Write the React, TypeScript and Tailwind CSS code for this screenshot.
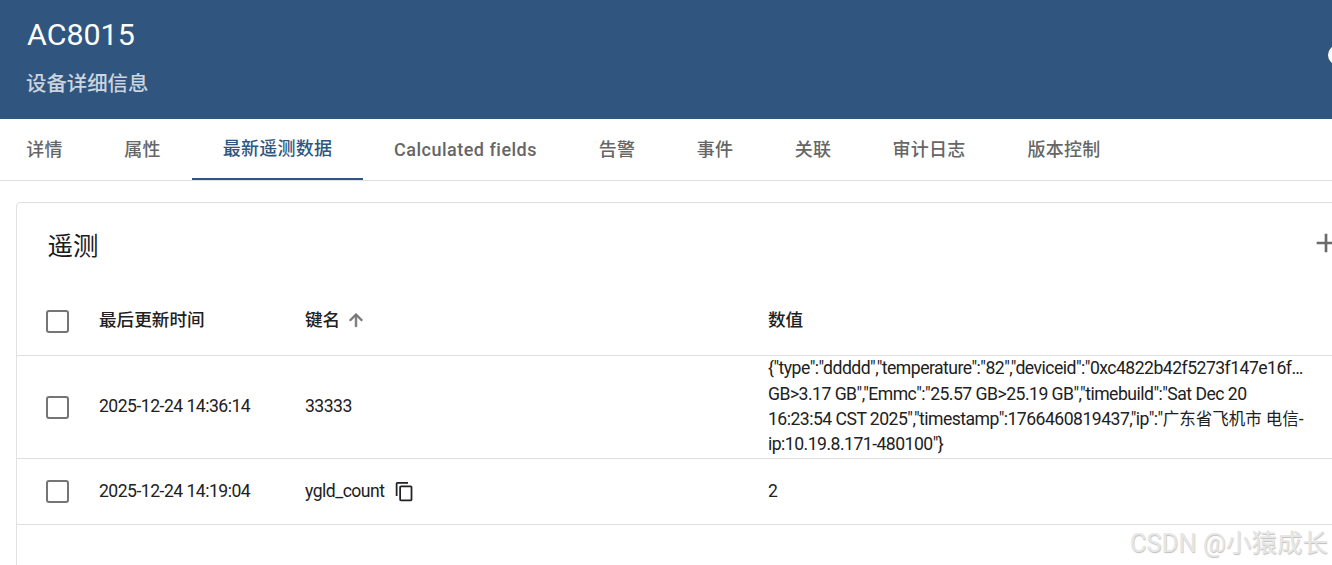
const font = "font-['Roboto','Noto_Sans_CJK_SC',sans-serif]";

const tabs = [
  { label: '详情', w: 'w-[97px]' },
  { label: '属性', w: 'w-[99px]' },
  { label: '最新遥测数据', w: 'w-[171px]', active: true },
  { label: 'Calculated fields', w: 'w-[205px]', wide: true },
  { label: '告警', w: 'w-[98px]' },
  { label: '事件', w: 'w-[98px]' },
  { label: '关联', w: 'w-[98px]' },
  { label: '审计日志', w: 'w-[134px]' },
  { label: '版本控制', w: 'w-[136px]' },
];

function Check() {
  return <div className="w-[23px] h-[23px] rounded-[3px] border-2 border-[#757575] bg-white" />;
}

export default function App() {
  return (
    <div className={`${font} relative w-[1332px] h-[565px] overflow-hidden bg-white`}>
      <header className="h-[119px] bg-[#30567f] pl-[27px] pt-[15px] relative">
        <div className="text-[30.4px] leading-[40px] text-white">AC8015</div>
        <div className="mt-[15px] text-[20.4px] leading-[28px] font-medium text-white/75 -ml-px">设备详细信息</div>
        <div className="absolute left-[1328px] top-[45px] w-5 h-5 rounded-full bg-white" />
      </header>

      <nav className="h-[62px] flex border-b border-[#e0e0e0] -ml-1">
        {tabs.map((t) => (
          <div
            key={t.label}
            className={`${t.w} h-[61px] shrink-0 flex items-center justify-center text-[18px] font-medium ${
              t.wide ? 'tracking-[0.5px]' : 'tracking-[0.25px]'
            } ${t.active ? 'text-[#30567f] border-b-2 border-[#30567f]' : 'text-[#666666]'}`}
          >
            {t.label}
          </div>
        ))}
      </nav>

      <section className="ml-4 mt-[21px] w-[1400px] h-[400px] rounded-t-[4px] border border-[#e0e0e0] text-[17.6px] tracking-[-0.52px] text-[#212121]">
        <div className="h-[84px] flex items-center pl-[30.5px] pr-[70px] justify-between">
          <h2 className="text-[25.5px] tracking-normal font-normal text-[#1a1a1a] translate-y-[1px]">遥测</h2>
          <svg width="32" height="32" viewBox="0 0 24 24" className="absolute left-[1309.5px] top-[226.5px]" fill="#6b6b6b">
            <path d="M19 13h-6v6h-2v-6H5v-2h6V5h2v6h6v2z" />
          </svg>
        </div>

        <div className="h-[69px] flex items-center border-b border-[#e0e0e0] font-medium tracking-normal">
          <div className="w-[82px] pl-[29px]"><Check /></div>
          <div className="w-[206px] -translate-y-px">最后更新时间</div>
          <div className="w-[463px] flex items-center gap-[6px] -translate-y-px">
            键名
            <svg width="20" height="20" viewBox="0 0 24 24" fill="#757575" stroke="#757575" strokeWidth="0.8"><path d="M4 12l1.410 1.410L11 7.830V20h2V7.830l5.580 5.590L20 12l-8-8-8 8z" /></svg>
          </div>
          <div className="-translate-y-px">数值</div>
        </div>

        <div className="h-[103px] flex items-center border-b border-[#e0e0e0]">
          <div className="w-[82px] pl-[29px]"><Check /></div>
          <div className="w-[206px] -translate-y-px">2025-12-24 14:36:14</div>
          <div className="w-[463px] -translate-y-px">33333</div>
          <div className="w-[540px] leading-[25.4px] whitespace-nowrap">
            <div>{'{"type":"ddddd","temperature":"82","deviceid":"0xc4822b42f5273f147e16f…'}</div>
            <div>{'GB>3.17 GB","Emmc":"25.57 GB>25.19 GB","timebuild":"Sat Dec 20'}</div>
            <div>
              {'16:23:54 CST 2025","timestamp":1766460819437,"ip":"'}
              <span className="text-[16.5px] tracking-normal">广东省飞机市 电信</span>-
            </div>
            <div>{'ip:10.19.8.171-480100"}'}</div>
          </div>
        </div>

        <div className="h-[66px] flex items-center border-b border-[#e0e0e0]">
          <div className="w-[82px] pl-[29px]"><Check /></div>
          <div className="w-[206px]">2025-12-24 14:19:04</div>
          <div className="w-[463px] flex items-center gap-[10px]">
            ygld_count
            <svg width="21" height="21" viewBox="0 0 24 24" fill="#212121"><path d="M16 1H4c-1.100 0-2 .9-2 2v14h2V3h12V1zm3 4H8c-1.100 0-2 .9-2 2v14c0 1.100.9 2 2 2h11c1.100 0 2-.9 2-2V7c0-1.100-.9-2-2-2zm0 16H8V7h11v14z" /></svg>
          </div>
          <div>2</div>
        </div>
      </section>

      <div className="absolute left-[1130px] top-[527px] text-[25.5px] leading-[32px] text-[#e6e6e6] [text-shadow:0.5px_0.5px_1px_#c0c0c0] whitespace-nowrap">CSDN @小猿成长</div>
    </div>
  );
}
